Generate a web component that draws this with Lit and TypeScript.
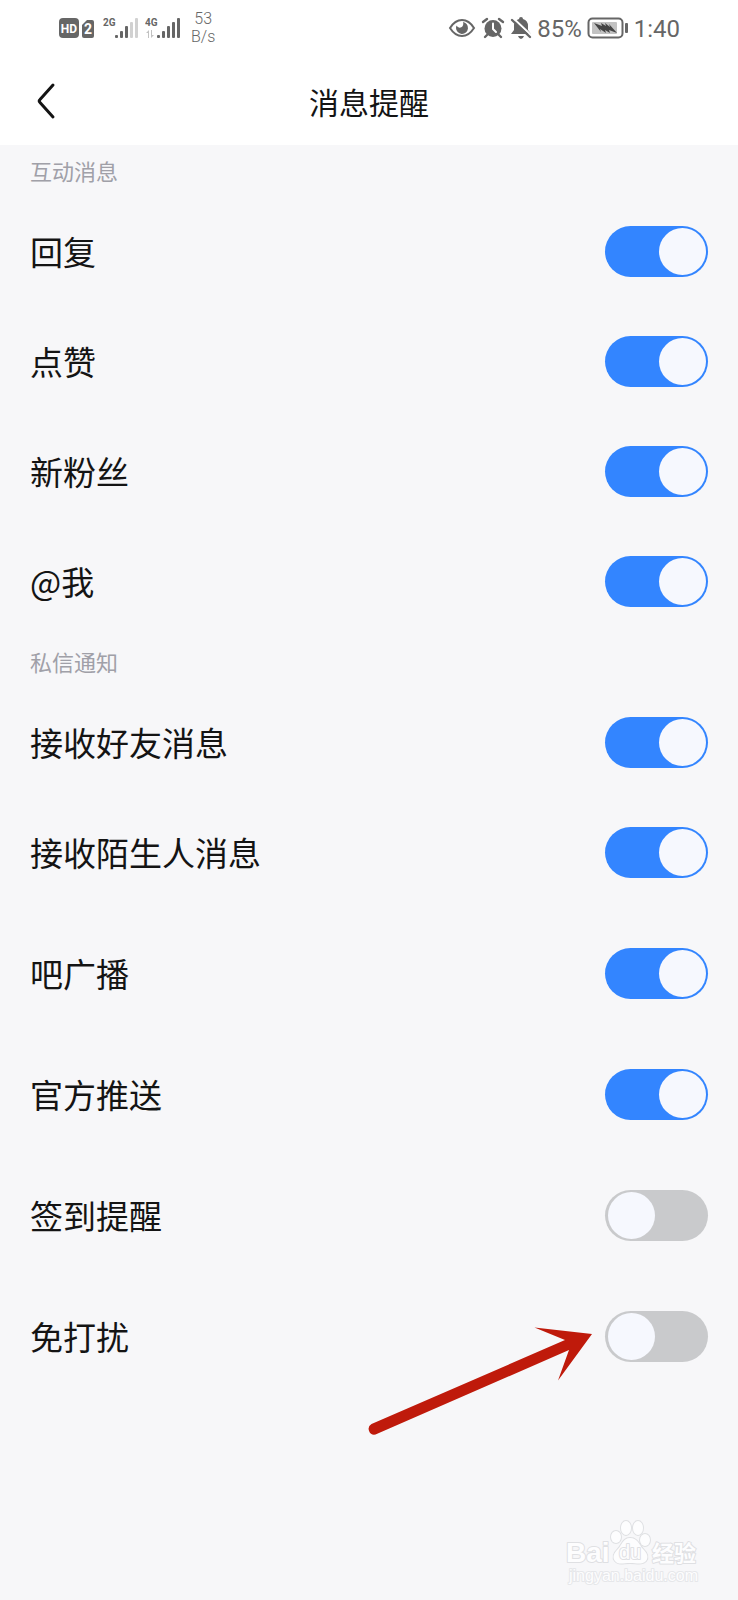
import { LitElement, html, css, svg, nothing } from "lit";
import { customElement, property, state } from "lit/decorators.js";

interface Setting {
  id: string;
  label: string;
  on: boolean;
  spaced?: boolean;
  pointed?: boolean;
}

interface Section {
  title: string;
  items: Setting[];
}

@customElement("status-bar")
export class StatusBar extends LitElement {
  static styles = css`
    :host {
      display: flex;
      justify-content: space-between;
      align-items: center;
      height: 56px;
      padding: 0 58px;
      color: #666;
      font-family: Roboto, "Noto Sans", sans-serif;
    }
    .group {
      display: flex;
      align-items: center;
    }
    .left {
      gap: 7px;
    }
    .right {
      gap: 5px;
    }
    .speed {
      display: flex;
      flex-direction: column;
      align-items: center;
      margin-left: 4px;
      font-size: 16px;
      line-height: 18px;
      font-weight: 300;
    }
    .value {
      font-size: 24px;
      line-height: 28px;
      padding-top: 2px;
    }
    .tag {
      font-weight: 700;
    }
    svg {
      display: block;
      fill: currentColor;
    }
  `;

  private signal(kind: string, strong: number, data: boolean) {
    return html`<svg width="35" height="22" viewBox="0 0 35 22" role="img" aria-label=${kind}>
      <text class="tag" x="0" y="9" font-size="10">${kind}</text>
      ${data
        ? svg`<path opacity=".4" d="M3 21v-5H1l3-3v8zM6 21v-8h1v5h2l-3 3z" />`
        : nothing}
      ${[3, 7, 12, 16, 20].map(
        (h, i) => svg`<rect x=${12 + i * 5} y=${21 - h} width="3" height=${h} rx="1"
          opacity=${i < strong ? 1 : 0.3} />`
      )}
    </svg>`;
  }

  render() {
    return html`
      <div class="group left">
        <svg width="38" height="22" viewBox="0 0 38 22" role="img" aria-label="HD 2">
          <rect x="1" y="1" width="20" height="20" rx="4" />
          <text class="tag" x="11" y="16" font-size="12" text-anchor="middle" fill="#fff">HD</text>
          <path d="M29 3h5a2 2 0 0 1 2 2v14a2 2 0 0 1-2 2h-8a2 2 0 0 1-2-2V8z" />
          <text class="tag" x="30" y="17" font-size="14" text-anchor="middle" fill="#fff">2</text>
        </svg>
        ${this.signal("2G", 3, false)} ${this.signal("4G", 5, true)}
        <div class="speed"><span>53</span><span>B/s</span></div>
      </div>
      <div class="group right">
        <svg width="28" height="22" viewBox="0 0 28 22" role="img" aria-label="护眼">
          <path fill="none" stroke="currentColor" stroke-width="2"
            d="M2 11Q7 3 14 3t12 8q-5 8-12 8T2 11z" />
          <path d="M15 5a6 6 0 1 1-7 6c0-1 .2-1.800.6-2.500 1 1.800 2.600 2.500 4.200 2 2.200-.7 3-3.200 2.200-5.500z" />
        </svg>
        <svg width="24" height="22" viewBox="0 0 24 22" role="img" aria-label="闹钟">
          <circle cx="12" cy="11.500" r="8.500" />
          <path fill="none" stroke="currentColor" stroke-width="2.400" stroke-linecap="round"
            d="M2 5l4-3M22 5l-4-3M6 18l-2 2M18 18l2 2" />
          <path fill="none" stroke="#fff" stroke-width="2" stroke-linecap="round"
            stroke-linejoin="round" d="M12 6.500v5.500l3 3" />
        </svg>
        <svg width="22" height="22" viewBox="0 0 22 22" role="img" aria-label="静音">
          <path d="M11 0a2 2 0 0 1 2 2q5 1.500 5 7v4l3 4H1l3-4V9q0-5.500 5-7a2 2 0 0 1 2-2zM8 19h6q-1 3-3 3t-3-3z" />
          <path stroke="#fff" stroke-width="2" d="M3 1l19 18" />
          <path stroke="currentColor" stroke-width="2.400" stroke-linecap="round" d="M2 3l18 17" />
        </svg>
        <span class="value">85%</span>
        <svg width="42" height="22" viewBox="0 0 42 22" role="img" aria-label="充电中">
          <rect x="1.500" y="1.500" width="34" height="19" rx="4" fill="none"
            stroke="currentColor" stroke-width="2" />
          <rect x="5" y="5" width="25" height="12" rx="1" opacity=".4" />
          <path fill="#444" d="M7 6l8 3-1-3 5 3-1-3 5 4-1-3 8 9-8-3 1 3-5-3 1 3-6-4 1 3z" />
          <rect x="38" y="6" width="3" height="10" rx="1" />
        </svg>
        <span class="value">1:40</span>
      </div>
    `;
  }
}

@customElement("setting-row")
export class SettingRow extends LitElement {
  @property({ attribute: false }) item!: Setting;

  static styles = css`
    :host {
      display: block;
    }
    .row {
      position: relative;
      display: flex;
      align-items: center;
      justify-content: space-between;
      height: 110px;
      padding: 0 30px;
    }
    .spaced {
      margin-top: 11px;
    }
    .label {
      flex: 1;
      font-size: 33px;
      line-height: 48px;
      color: #141414;
    }
    .switch {
      appearance: none;
      display: flex;
      align-items: center;
      width: 103px;
      height: 51px;
      margin: 0;
      padding: 0 2px 0 3px;
      border-radius: 26px;
      background: #c9cacc;
      cursor: pointer;
    }
    .switch::before {
      content: "";
      width: 47px;
      height: 47px;
      border-radius: 50%;
      background: #f6f8fe;
    }
    .switch:checked {
      justify-content: flex-end;
      background: #3385ff;
    }
    .arrow {
      position: absolute;
      right: 144px;
      top: 45px;
      fill: #bf1a0b;
      pointer-events: none;
    }
  `;

  private toggle(e: Event) {
    this.item = { ...this.item, on: (e.target as HTMLInputElement).checked };
  }

  render() {
    const { id, label, on, spaced, pointed } = this.item;
    return html`<div class="row ${spaced ? "spaced" : ""}">
      <label class="label" for=${id}>${label}</label>
      <input class="switch" type="checkbox" role="switch" id=${id}
        .checked=${on} @change=${this.toggle} />
      ${pointed
        ? html`<svg class="arrow" width="228" height="112" viewBox="0 0 228 112" aria-hidden="true">
            <path d="M5.500 98L199 14 168.500 1.500 226 8 192 54.500 203 24 9.500 108.500A5.700 5.700 0 0 1 5.500 98z" />
          </svg>`
        : nothing}
    </div>`;
  }
}

@customElement("site-mark")
export class SiteMark extends LitElement {
  static styles = css`
    :host {
      position: absolute;
      right: 32px;
      bottom: 8px;
      pointer-events: none;
    }
    .mark {
      display: block;
      overflow: visible;
      fill: #fdfdfe;
      stroke: #dfe0e3;
      stroke-width: 2px;
      paint-order: stroke;
      stroke-linejoin: round;
      font-family: "Liberation Sans", "Noto Sans CJK SC", sans-serif;
    }
    .bold {
      font-weight: 700;
    }
    .thin {
      stroke: #e6e7ea;
    }
  `;

  render() {
    return html`<svg class="mark" width="140" height="76" viewBox="0 0 140 76">
      <text class="bold" x="0" y="46" font-size="28">Bai</text>
      <ellipse cx="50" cy="21" rx="5" ry="6" />
      <ellipse cx="60" cy="12" rx="5" ry="7" />
      <ellipse cx="72" cy="12" rx="5" ry="7" />
      <ellipse cx="79" cy="24" rx="5" ry="6" />
      <path d="M64 22c8 0 9 7 13 11s6 8 3 12c-4 4-9 2-16 2s-12 2-15-2-1-8 3-12 5-11 12-11z" />
      <text x="64" y="43" font-size="20" text-anchor="middle">du</text>
      <text class="bold" x="86" y="45" font-size="22">经验</text>
      <text class="thin" x="3" y="65" font-size="16">jingyan.baidu.com</text>
    </svg>`;
  }
}

@customElement("app-root")
export class AppRoot extends LitElement {
  @state() private sections: Section[] = [
    {
      title: "互动消息",
      items: [
        { id: "reply", label: "回复", on: true },
        { id: "like", label: "点赞", on: true },
        { id: "fans", label: "新粉丝", on: true },
        { id: "mention", label: "@我", on: true },
      ],
    },
    {
      title: "私信通知",
      items: [
        { id: "friend", label: "接收好友消息", on: true },
        { id: "stranger", label: "接收陌生人消息", on: true },
        { id: "broadcast", label: "吧广播", on: true, spaced: true },
        { id: "official", label: "官方推送", on: true, spaced: true },
        { id: "checkin", label: "签到提醒", on: false, spaced: true },
        { id: "dnd", label: "免打扰", on: false, spaced: true, pointed: true },
      ],
    },
  ];

  static styles = css`
    :host {
      display: block;
      position: relative;
      min-height: 100vh;
      background: #f7f7f9;
      font-family: "Noto Sans CJK SC", sans-serif;
    }
    .top {
      background: #fff;
    }
    .nav {
      display: grid;
      grid-template-columns: 1fr auto 1fr;
      align-items: center;
      height: 89px;
      padding: 0 30px;
    }
    .back {
      justify-self: start;
      display: flex;
      padding: 4px;
      border: 0;
      background: none;
      color: #141414;
      cursor: pointer;
    }
    .heading {
      margin: 0;
      font-size: 30px;
      line-height: 42px;
      font-weight: 400;
      color: #141414;
    }
    .title {
      margin: 0;
      padding: 1px 30px;
      font-size: 22px;
      line-height: 49px;
      font-weight: 400;
      color: #a0a0a8;
    }
  `;

  render() {
    return html`
      <header class="top">
        <status-bar></status-bar>
        <nav class="nav">
          <button class="back" aria-label="返回">
            <svg width="24" height="40" viewBox="0 0 24 40" fill="none" stroke="currentColor"
              stroke-width="3" stroke-linecap="round" stroke-linejoin="round">
              <path d="M19 4L6 18.500q-1.500 1.500 0 3L19 36" />
            </svg>
          </button>
          <h1 class="heading">消息提醒</h1>
        </nav>
      </header>
      <main>
        ${this.sections.map(
          (s) => html`<section>
            <h2 class="title">${s.title}</h2>
            ${s.items.map((i) => html`<setting-row .item=${i}></setting-row>`)}
          </section>`
        )}
      </main>
      <site-mark></site-mark>
    `;
  }
}
